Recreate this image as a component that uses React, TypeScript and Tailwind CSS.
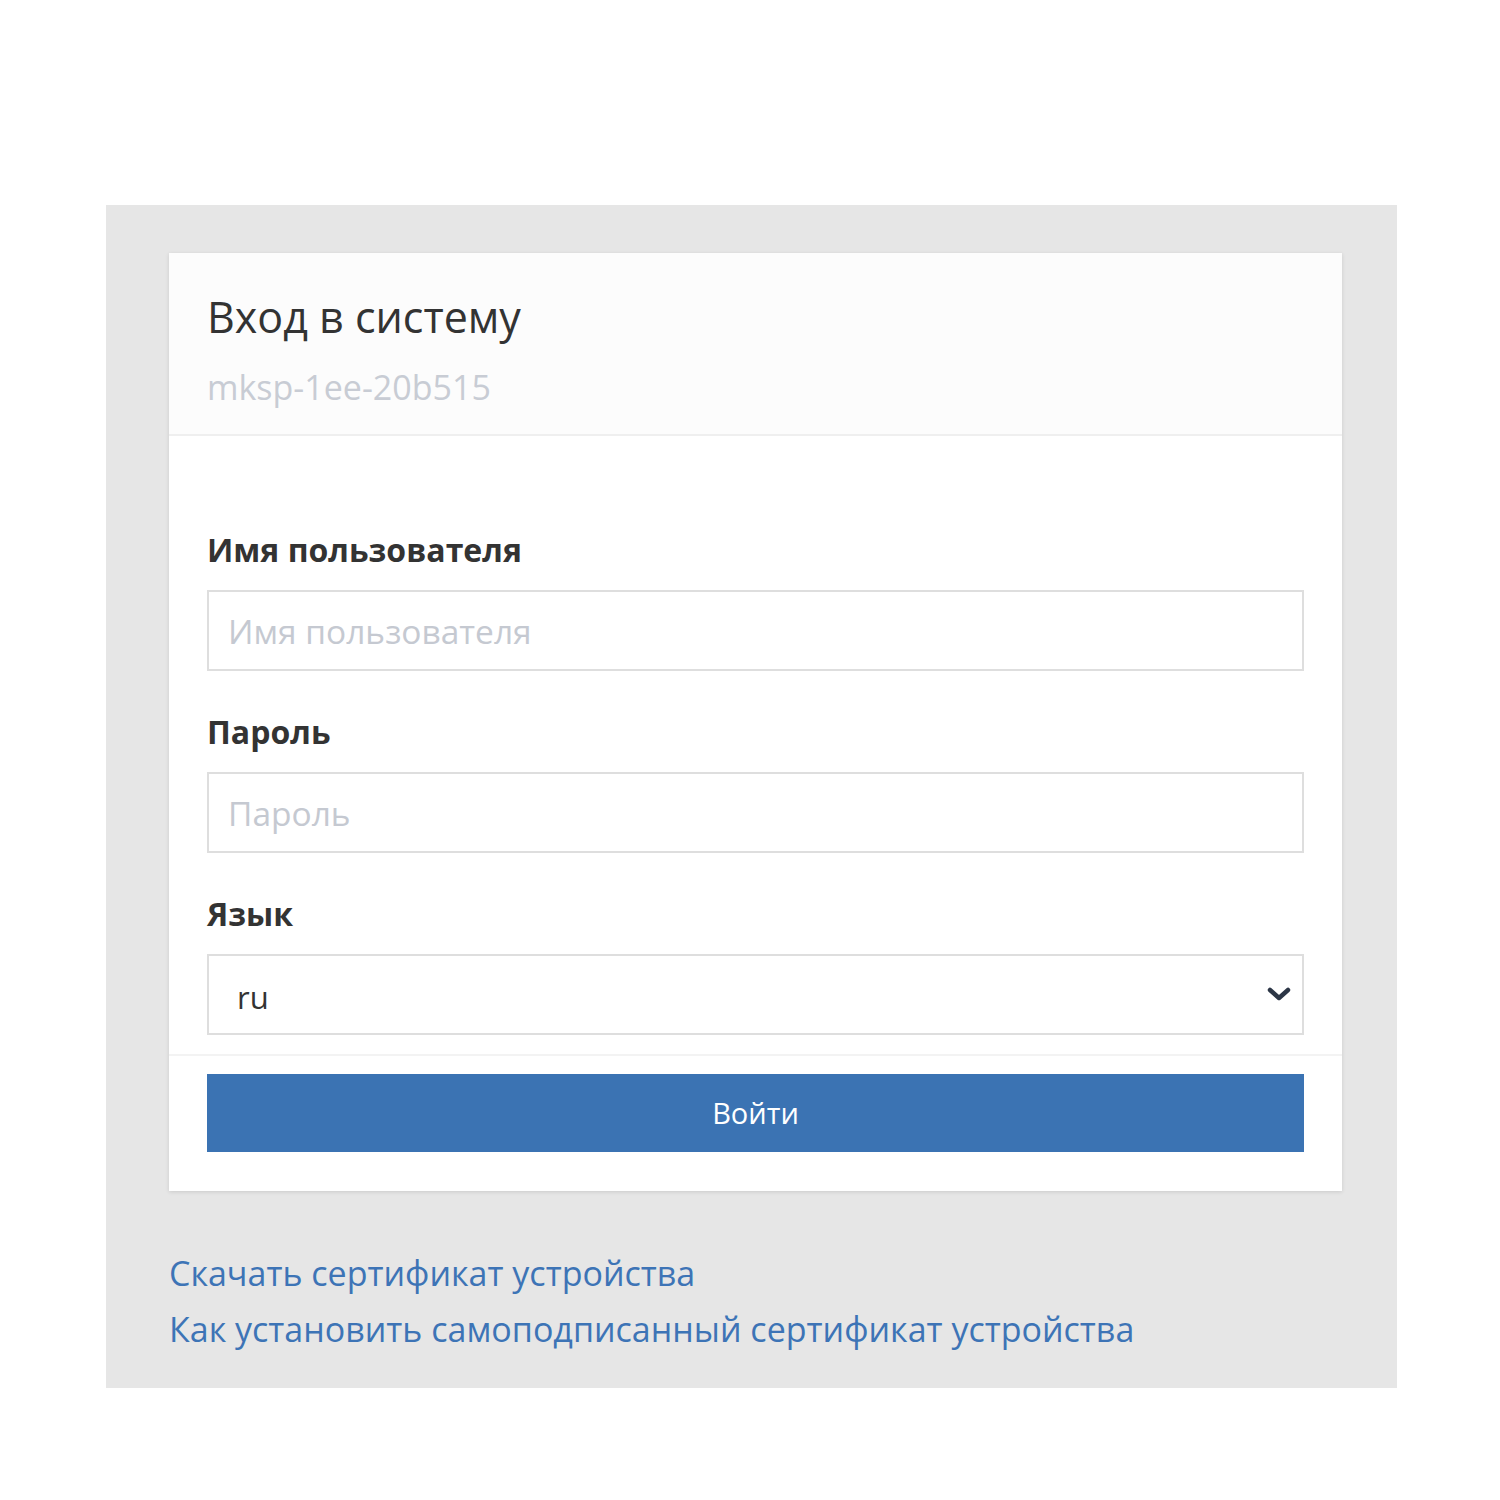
import React from 'react'

const font = { fontFamily: '"Open Sans", "Noto Sans", sans-serif' }

const Field: React.FC<{ label: string; children: React.ReactNode; first?: boolean }> = ({ label, children, first }) => (
  <div className={first ? '' : 'mt-[41px]'}>
    <div className="text-[32px] leading-[40px] font-bold text-[#333] mb-[20px]">{label}</div>
    {children}
  </div>
)

const App: React.FC = () => {
  return (
    <div className="w-full h-[1500px] bg-white pt-[205px] pl-[106px]" style={font}>
      <div className="w-[1291px] h-[1183px] bg-[#e6e6e6] pl-[63px] pt-[48px]">
        <div className="w-[1173px] bg-white shadow-[0_1px_4px_rgba(0,0,0,0.12)]">
          {/* header */}
          <div className="h-[183px] bg-[#fcfcfc] border-b-2 border-[#efefef] px-[38px] pt-[36px]">
            <h1 className="text-[43px] leading-[56px] text-[#333] font-normal">Вход в систему</h1>
            <div className="text-[34px] leading-[44px] mt-[20px] text-[#c8ccd4]">mksp-1ee-20b515</div>
          </div>

          {/* body */}
          <div className="px-[38px] pt-[94px] pb-[19px] border-b-2 border-[#f3f3f3]">
            <Field label="Имя пользователя" first>
              <input
                className="w-full h-[81px] border-2 border-[#dedede] px-[19px] text-[33.5px] text-[#333] placeholder:text-[#c5c9d1] outline-none"
                placeholder="Имя пользователя"
              />
            </Field>
            <Field label="Пароль">
              <input
                type="password"
                className="w-full h-[81px] border-2 border-[#dedede] px-[19px] text-[33.5px] text-[#333] placeholder:text-[#c5c9d1] outline-none"
                placeholder="Пароль"
              />
            </Field>
            <Field label="Язык">
              <div className="relative w-full h-[81px] border-2 border-[#dedede] flex items-center pl-[28px]">
                <span className="text-[31px] text-[#333] mt-[6px]">ru</span>
                <svg
                  className="absolute right-[10px] top-[29px]"
                  width="26"
                  height="18"
                  viewBox="0 0 26 18"
                  fill="none"
                  stroke="#2c3646"
                  strokeWidth="4.5"
                  strokeLinecap="round"
                  strokeLinejoin="round"
                >
                  <path d="M4 5 L13 13 L22 5" />
                </svg>
              </div>
            </Field>
          </div>

          {/* footer */}
          <div className="px-[38px] pt-[18px] pb-[39px]">
            <button className="w-full h-[78px] bg-[#3b73b3] text-white text-[29px] flex items-center justify-center">
              Войти
            </button>
          </div>
        </div>

        <div className="mt-[54px] text-[34px] leading-[56px] text-[#3d74b6]">
          <a href="#" className="block">Скачать сертификат устройства</a>
          <a href="#" className="block">Как установить самоподписанный сертификат устройства</a>
        </div>
      </div>
    </div>
  )
}

export default App
